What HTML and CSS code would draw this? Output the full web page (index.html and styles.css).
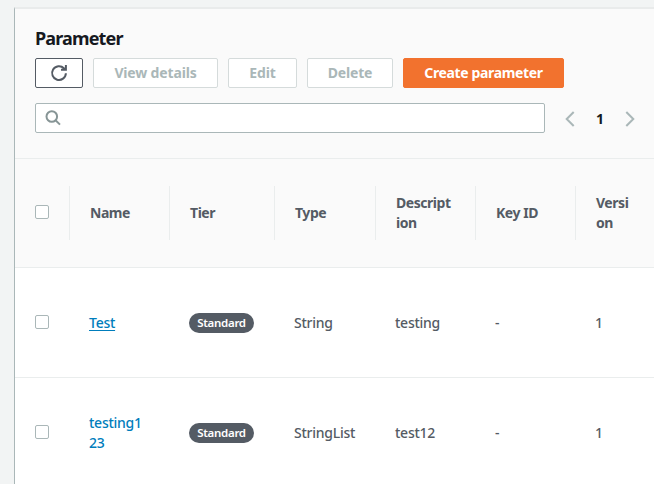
FILE: index.html
```html
<!DOCTYPE html>
<html lang="en">
<head>
<meta charset="utf-8">
<title>Parameter</title>
<link rel="stylesheet" href="styles.css">
</head>
<body>
<main class="panel">
  <header class="panel-header">
    <h1 class="title">Parameter</h1>
    <div class="actions">
      <button class="btn btn-refresh" aria-label="Refresh">
        <svg width="18" height="18" viewBox="0 0 18 18" fill="none" stroke="#545b64" stroke-width="2"><path d="M15.9 9.3A6.9 6.9 0 1 1 13.9 4.2L15.4 5.6M11 5.8H15.9V1"/></svg>
      </button>
      <button class="btn btn-view" disabled><span>View details</span></button>
      <button class="btn btn-edit" disabled><span>Edit</span></button>
      <button class="btn btn-delete" disabled><span>Delete</span></button>
      <button class="btn btn-primary"><span>Create parameter</span></button>
    </div>
    <div class="filter">
      <div class="search">
        <svg width="16" height="16" viewBox="0 0 16 16" fill="none" stroke="#879596" stroke-width="2"><circle cx="6.8" cy="6.5" r="5.3"/><path d="M10.5 10.2L15 14.6"/></svg>
      </div>
      <nav class="pager">
        <svg width="10" height="16" viewBox="0 0 10 16" fill="none" stroke="#aab7b8" stroke-width="2"><path d="M8.7 1L1.7 8l7 7"/></svg>
        <span class="page">1</span>
        <svg width="10" height="16" viewBox="0 0 10 16" fill="none" stroke="#aab7b8" stroke-width="2"><path d="M1.3 1l7 7-7 7"/></svg>
      </nav>
    </div>
  </header>
  <div class="row head">
    <div class="cell"><i class="check"></i></div>
    <div class="cell"><span>Name</span></div>
    <div class="cell"><span>Tier</span></div>
    <div class="cell"><span>Type</span></div>
    <div class="cell"><span>Descript<br>ion</span></div>
    <div class="cell"><span>Key ID</span></div>
    <div class="cell"><span>Versi<br>on</span></div>
  </div>
  <div class="row">
    <div class="cell"><i class="check"></i></div>
    <div class="cell"><a class="link underlined">Test</a></div>
    <div class="cell"><span class="badge">Standard</span></div>
    <div class="cell"><span>String</span></div>
    <div class="cell"><span>testing</span></div>
    <div class="cell"><span>-</span></div>
    <div class="cell"><span>1</span></div>
  </div>
  <div class="row">
    <div class="cell"><i class="check"></i></div>
    <div class="cell"><a class="link">testing1<br>23</a></div>
    <div class="cell"><span class="badge">Standard</span></div>
    <div class="cell"><span>StringList</span></div>
    <div class="cell"><span>test12</span></div>
    <div class="cell"><span>-</span></div>
    <div class="cell"><span>1</span></div>
  </div>
</main>
</body>
</html>
```
FILE: styles.css
```css
* { box-sizing: border-box; }
html, body { height: 100%; }
body {
  margin: 0;
  padding: 7px 0 0 14px;
  overflow: hidden;
  background: #f2f4f4;
  color: #545b64;
  font: 500 14px/20px "Noto Sans", sans-serif;
  letter-spacing: -0.25px;
}
.panel {
  height: 500px;
  background: #fff;
  border-top: 2px solid #e9ebeb;
  border-left: 1px solid #aab7b8;
}
.panel-header {
  height: 150px;
  padding: 18px 19px 0 20px;
  background: #fafafa;
  border-bottom: 1px solid #eaeded;
}
.title {
  margin: 0 0 9px;
  color: #16191f;
  font-size: 18px;
  line-height: 22px;
  letter-spacing: -0.85px;
}
.actions { display: flex; gap: 10px; }
.btn {
  display: flex;
  align-items: center;
  justify-content: center;
  height: 30px;
  padding: 0;
  background: #fff;
  border: 1px solid #d5dbdb;
  border-radius: 2px;
  color: #aab7b8;
  font: bold 14px/20px "Noto Sans", sans-serif;
  letter-spacing: -0.15px;
  white-space: nowrap;
}
.btn-refresh { width: 48px; border-color: #545b64; }
.btn-view { width: 125px; }
.btn-edit { width: 69px; }
.btn-delete { width: 86px; }
.btn-primary { width: 161px; background: #f2722e; border-color: #f2722e; color: #fff; letter-spacing: -0.35px; }
.filter { display: flex; align-items: center; justify-content: space-between; margin-top: 15px; }
.search {
  display: flex;
  align-items: center;
  width: 510px;
  height: 30px;
  padding-left: 9px;
  background: #fff;
  border: 1px solid #aab7b8;
  border-radius: 2px;
}
.pager { display: flex; align-items: center; justify-content: space-between; width: 70px; padding-top: 2px; }
.page { color: #16191f; font-weight: bold; }
.row {
  display: grid;
  grid-template-columns: 55px 100px 105px 101px 100px 100px 1fr;
  align-items: center;
  height: 110px;
  border-bottom: 1px solid #eaeded;
}
.row.head { height: 109px; background: #fafafa; font-weight: bold; letter-spacing: -0.45px; }
.cell { display: flex; align-items: center; height: 54px; padding-left: 19px; white-space: nowrap; }
.cell:first-child { padding-left: 20px; }
.head .cell { padding-left: 20px; border-right: 1px solid #eaeded; }
.head .cell:last-child { border-right: 0; }
.check { width: 14px; height: 14px; margin-top: -2px; background: #fff; border: 1px solid #aab7b8; border-radius: 2px; }
.link { color: #007dbc; }
.underlined { text-decoration: underline; text-underline-offset: 2px; }
.badge {
  width: 65px;
  height: 20px;
  border-radius: 10px;
  background: #545b64;
  color: #fff;
  font-size: 11.5px;
  font-weight: 600;
  letter-spacing: -0.3px;
  text-align: center;
}
```
